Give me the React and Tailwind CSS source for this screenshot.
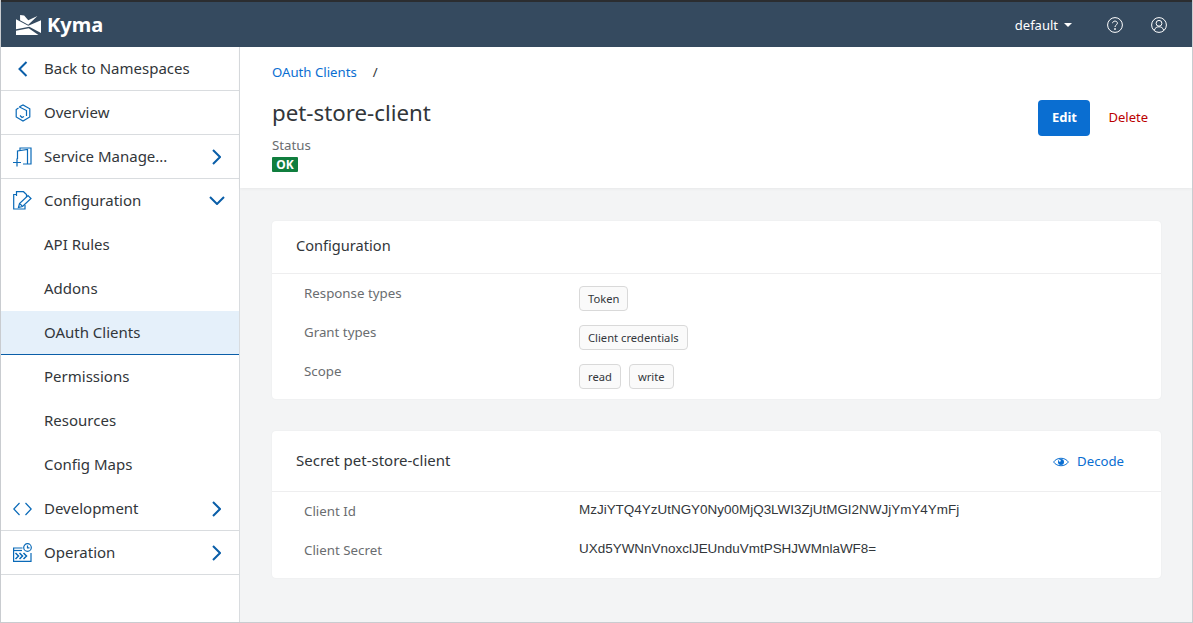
const FONT = "font-['Noto_Sans',sans-serif]"

function KymaLogo() {
  return (
    <svg width="25" height="20" viewBox="0 0 24.500 19.500" className="shrink-0" fill="#fff">
      <path d="M4 0 L8 0.500 L12 5 L21 1 L12 9.500 L4 5 Z" />
      <path d="M0 4 L12 10.500 L24.500 5 V17.500 L13 11.500 L0 14 Z" />
      <path d="M0 15.500 L12.500 13 L22 19.500 H0 Z" />
    </svg>
  )
}

function OverviewIcon() {
  return (
    <svg width="18" height="18" viewBox="0 0 18 18" fill="none" stroke="#0a6ab8" strokeWidth="1.200">
      <path d="M5.500 2.800 L9 1 L15.800 4.800 V13 L9 17 L2.200 13 V5.500 L4.500 4" />
      <path d="M5 2.800 L12.500 6.500 V12" />
      <path d="M6 11.500 L8 13.500 L10 12.500" />
    </svg>
  )
}

function ServiceIcon() {
  return (
    <svg width="19" height="20" viewBox="0 0 19 20" fill="none" stroke="#0a6ab8" strokeWidth="1.200">
      <path d="M4.500 12 V4 L14.500 2.500 V17" />
      <path d="M7 3.500 V1 H18 V17 H10" />
      <path d="M0 15.500 H8 M4 11.500 V19.500" />
    </svg>
  )
}

function ConfigIcon() {
  return (
    <svg width="19" height="19" viewBox="0 0 19 19" fill="none" stroke="#0a6ab8" strokeWidth="1.200">
      <path d="M3.500 3.500 H0.700 V18 H12 V14" />
      <path d="M3.500 5 V0.700 H10.500 L13.500 3.500 V6" />
      <path d="M5.500 16.500 L6.500 12.500 L15 4.500 L18 7.500 L9.500 15.500 Z" />
      <path d="M7 12.800 L9.200 15" />
    </svg>
  )
}

function DevIcon() {
  return (
    <svg width="19" height="14" viewBox="0 0 19 14" fill="none" stroke="#0a6ab8" strokeWidth="1.200">
      <path d="M6.500 1 L0.800 7 L6.500 13 M12.500 1 L18.200 7 L12.500 13" />
    </svg>
  )
}

function OperationIcon() {
  return (
    <svg width="19" height="19" viewBox="0 0 19 19" fill="none" stroke="#0a6ab8" strokeWidth="1.200">
      <path d="M9.500 5 H0.600 V18.400 H18 V10" />
      <path d="M0.600 7.500 H9" />
      <g strokeWidth="1.500">
        <path d="M2.500 10 L5.500 13 L2.500 16 M6.500 10 L9.500 13 L6.500 16 M10.500 10 L13.500 13 L10.500 16" />
      </g>
      <circle cx="14.500" cy="4.500" r="3.800" fill="#fff" />
      <path d="M14.500 2.500 V4.800 H16.500" />
    </svg>
  )
}

function BackChevron() {
  return (
    <svg width="10" height="16" viewBox="0 0 10 16" fill="none" stroke="#0a5ea8" strokeWidth="2">
      <path d="M8.500 1 L1.500 8 L8.500 15" />
    </svg>
  )
}

function RightChevron() {
  return (
    <svg width="9" height="16" viewBox="0 0 9 16" fill="none" stroke="#0a5ea8" strokeWidth="2" className="ml-auto mr-[18px]">
      <path d="M1 1 L8 8 L1 15" />
    </svg>
  )
}

function DownChevron() {
  return (
    <svg width="16" height="9" viewBox="0 0 16 9" fill="none" stroke="#0a5ea8" strokeWidth="2" className="ml-auto mr-[14px]">
      <path d="M1 1 L8 8 L15 1" />
    </svg>
  )
}

function HelpIcon() {
  return (
    <svg width="16" height="16" viewBox="0 0 16 16" fill="none" stroke="#fff" strokeWidth="1">
      <circle cx="8" cy="8" r="7.400" />
      <path d="M5.600 6.200 C5.600 3.400 10.400 3.400 10.400 6.200 C10.400 8 8 8 8 10" />
      <circle cx="8" cy="12" r="0.500" fill="#fff" />
    </svg>
  )
}

function UserIcon() {
  return (
    <svg width="16" height="16" viewBox="0 0 16 16" fill="none" stroke="#fff" strokeWidth="1">
      <circle cx="8" cy="8" r="7.400" />
      <circle cx="8" cy="6.300" r="2.900" />
      <path d="M3.300 13.300 C4 10.600 6 9.800 8 9.800 C10 9.800 12 10.600 12.700 13.300" />
    </svg>
  )
}

function EyeIcon() {
  return (
    <svg width="16" height="12" viewBox="0 0 16 12" fill="none" stroke="#0a6ed1" strokeWidth="1">
      <path d="M0.600 6 C4 1 12 1 15.400 6 C12 11 4 11 0.600 6 Z" />
      <circle cx="8" cy="6" r="3" fill="#0a6ed1" stroke="none" />
      <circle cx="6.800" cy="4.800" r="1" fill="#fff" stroke="none" />
    </svg>
  )
}

const NAV = [
  { label: 'Back to Namespaces', icon: <BackChevron />, line: true },
  { label: 'Overview', icon: <OverviewIcon />, line: true },
  { label: 'Service Manage...', icon: <ServiceIcon />, arrow: 'right', line: true },
  { label: 'Configuration', icon: <ConfigIcon />, arrow: 'down' },
  { label: 'API Rules' },
  { label: 'Addons' },
  { label: 'OAuth Clients', selected: true },
  { label: 'Permissions' },
  { label: 'Resources' },
  { label: 'Config Maps' },
  { label: 'Development', icon: <DevIcon />, arrow: 'right', line: true },
  { label: 'Operation', icon: <OperationIcon />, arrow: 'right', line: true },
]

function NavRow({ item }) {
  return (
    <div className={
      'h-11 flex items-center text-[15px] text-[#32363a] border-b ' +
      (item.selected ? 'bg-[#e5f0fa] border-[#0a5ea8]' : item.line ? 'border-[#d9dcdf]' : 'border-transparent')
    }>
      <div className="w-[43px] flex justify-center shrink-0">{item.icon}</div>
      <span>{item.label}</span>
      {item.arrow === 'right' && <RightChevron />}
      {item.arrow === 'down' && <DownChevron />}
    </div>
  )
}

function Tag({ children }) {
  return (
    <span className="h-[25px] flex items-center px-2 pt-[1px] text-[11.200px] text-[#32363a] bg-[#fafafa] border border-[#d9d9d9] rounded-[4px]">
      {children}
    </span>
  )
}

function Row({ label, children }) {
  return (
    <div className="flex h-[39px]">
      <div className="w-[275px] text-[13.300px] leading-[14px] text-[#6a6d70]">{label}</div>
      <div className="flex gap-2">{children}</div>
    </div>
  )
}

export default function App() {
  return (
    <div className={FONT + ' w-[1193px] h-[623px] overflow-hidden flex flex-col bg-[#f3f4f5] border-x border-b border-[#c9ccd0]'}>
      {/* Top bar */}
      <header className="h-[47px] shrink-0 bg-[#354a5f] border-t-2 border-[#2b2d30] -mx-px flex items-center text-white">
        <div className="ml-[16px] flex items-center gap-[6px]">
          <KymaLogo />
          <span className="text-[20px] font-bold leading-none">Kyma</span>
        </div>
        <div className="ml-auto flex items-center text-[13px]">
          <span className="mt-[2px]">default</span>
          <span className="ml-[6px] w-0 h-0 border-x-[4px] border-x-transparent border-t-[4px] border-t-white" />
          <span className="ml-[35px] flex"><HelpIcon /></span>
          <span className="ml-[28px] mr-[26px] flex"><UserIcon /></span>
        </div>
      </header>

      <div className="flex-1 flex min-h-0">
        {/* Sidebar */}
        <aside className="w-[239px] shrink-0 bg-white border-r border-[#d9dcdf]">
          {NAV.map(item => <NavRow key={item.label} item={item} />)}
        </aside>

        <main className="flex-1 flex flex-col min-w-0">
          {/* Page header */}
          <div className="h-[141px] shrink-0 bg-white relative pl-[32px] pt-[16px] shadow-[0_1px_3px_rgba(0,0,0,0.05)]">
            <div className="text-[13.200px] leading-[18px]">
              <span className="text-[#0a6ed1]">OAuth Clients</span>
              <span className="ml-[16px] text-[#32363a]">/</span>
            </div>
            <h1 className="mt-[16px] text-[22.300px] leading-[32px] text-[#32363a]">pet-store-client</h1>
            <div className="mt-[7px] text-[13.300px] leading-[18px] text-[#6a6d70]">Status</div>
            <div className="mt-[3px] w-[26px] h-[15px] flex items-center justify-center bg-[#107e3e] rounded-[1px] text-white text-[12px] font-bold">OK</div>
            <div className="absolute right-[31px] top-[53px] flex items-center">
              <button className="w-[52px] h-[36px] bg-[#0a6ed1] text-white text-[13px] font-bold rounded-[4px]">Edit</button>
              <span className="ml-[18px] mr-[13px] text-[13px] text-[#bb0000]">Delete</span>
            </div>
          </div>

          {/* Content */}
          <div className="pl-[32px] pr-[31px] pt-[33px]">
            <section className="h-[178px] bg-white rounded-[4px] shadow-[0_0_2px_rgba(0,0,0,0.05)]">
              <div className="h-[53px] flex items-center px-[24px] border-b border-[#eeeeef] text-[14.600px] text-[#32363a]">
                <span className="mb-[2px]">Configuration</span>
              </div>
              <div className="pl-[32px] pt-[12px]">
                <Row label="Response types"><Tag>Token</Tag></Row>
                <Row label="Grant types"><Tag>Client credentials</Tag></Row>
                <Row label="Scope"><Tag>read</Tag><Tag>write</Tag></Row>
              </div>
            </section>

            <section className="h-[147px] mt-[32px] bg-white rounded-[4px] shadow-[0_0_2px_rgba(0,0,0,0.05)]">
              <div className="h-[61px] flex items-center justify-between pl-[24px] pr-[37px] border-b border-[#eeeeef]">
                <span className="mb-[2px] text-[15px] text-[#32363a]">Secret pet-store-client</span>
                <span className="mt-[2px] flex items-center gap-[8px] text-[13.200px] text-[#0a6ed1]"><EyeIcon />Decode</span>
              </div>
              <div className="pl-[32px] pt-[9px]">
                <div className="flex h-[39px] text-[#6a6d70]">
                  <div className="w-[275px] text-[13.300px] leading-[20px]">Client Id</div>
                  <div className="font-['Liberation_Sans',sans-serif] text-[13.460px] text-[#32363a] leading-[18px]">MzJiYTQ4YzUtNGY0Ny00MjQ3LWI3ZjUtMGI2NWJjYmY4YmFj</div>
                </div>
                <div className="flex h-[39px] text-[#6a6d70]">
                  <div className="w-[275px] text-[13.300px] leading-[20px]">Client Secret</div>
                  <div className="font-['Liberation_Sans',sans-serif] text-[13.460px] text-[#32363a] leading-[18px]">UXd5YWNnVnoxclJEUnduVmtPSHJWMnlaWF8=</div>
                </div>
              </div>
            </section>
          </div>
        </main>
      </div>
    </div>
  )
}
